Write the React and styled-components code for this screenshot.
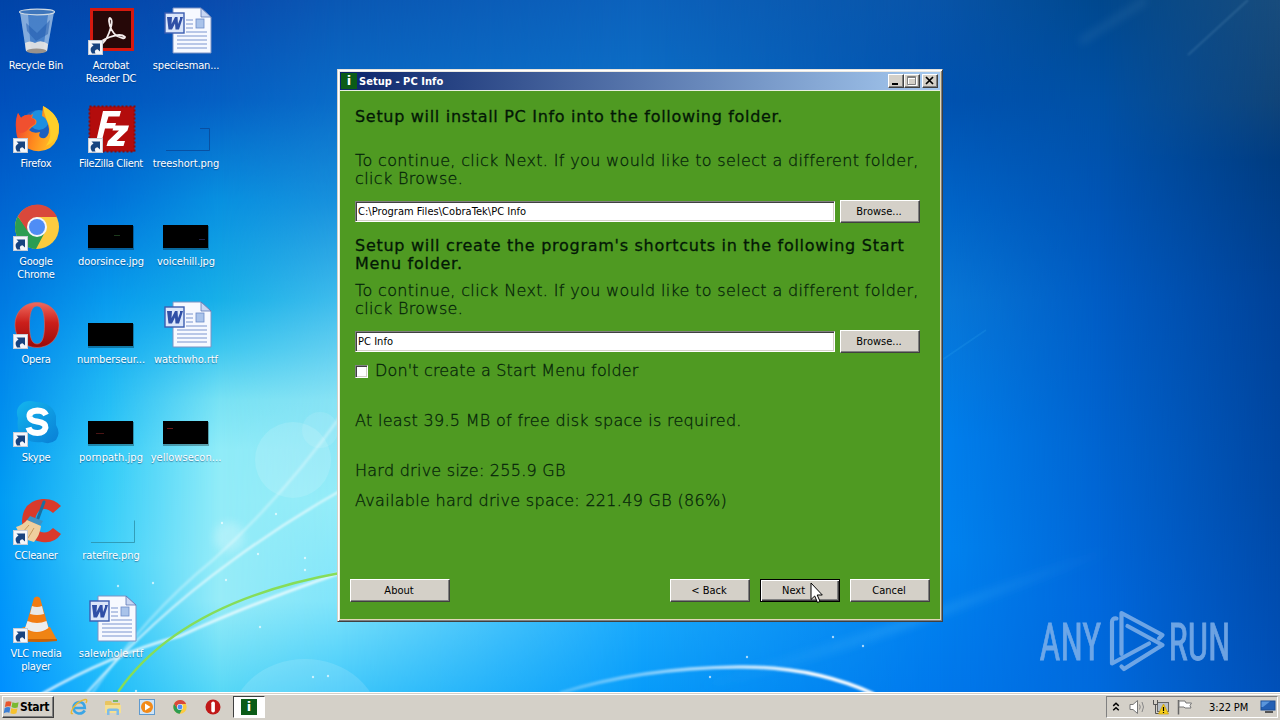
import React from 'react';
import styled, { createGlobalStyle, css } from 'styled-components';

const GlobalStyle = createGlobalStyle`
    * {
        box-sizing: border-box;
    }
    body {
        margin: 0;
        overflow: hidden;
        font-family: "DejaVu Sans Condensed", "DejaVu Sans", sans-serif;
        font-stretch: condensed;
        font-size: 11px;
        color: #000;
    }
`;

const Screen = styled.div`
    position: relative;
    width: 1280px;
    height: 720px;
    display: flex;
    flex-direction: column;
    overflow: hidden;
`;

/* ---------- wallpaper ---------- */

const Wallpaper = styled.div`
    position: absolute;
    inset: 0 0 28px 0;
    background: #0090ff;
    svg {
        position: absolute;
        inset: 0;
    }
`;
const Band = styled.div`
    position: absolute;
    inset: 0;
    background: linear-gradient(to bottom, ${({ $stops }) => $stops});
    ${({ $from, $to }) => $to > 0 && css`
        mask-image: linear-gradient(to right, transparent ${$from}px, #000 ${$to}px);
    `}
`;

const bands = [
    { from: 0, to: 0, stops: '#0044a8 0, #0050bc 100px, #0064d0 200px, #0084ea 350px, #009cf4 500px, #0090ff 692px' },
    { from: 0, to: 110, stops: '#0448ac 0, #0058c0 100px, #0074da 200px, #089cee 300px, #20b8f4 380px, #34ccf8 460px, #40d0fa 560px, #20bcfa 692px' },
    { from: 110, to: 220, stops: '#0a4cae 0, #0560c4 100px, #0890e0 200px, #18b0e8 300px, #40c8f0 350px, #78e2f4 400px, #90ecf8 450px, #98ecf8 600px, #58d8f6 692px' },
    { from: 220, to: 340, stops: '#0a58b4 0, #0a6cc8 100px, #1890dc 200px, #40bcec 300px, #88e2f4 400px, #94ecf8 500px, #80e4fa 600px, #40c8fa 692px' },
    { from: 340, to: 640, stops: '#0c62bc 0, #0c70c8 100px, #2098e0 400px, #18a8fc 620px, #089cfa 692px' },
    { from: 640, to: 940, stops: '#0854a8 0, #0052b0 100px, #0064c8 200px, #0878d8 300px, #0080ee 440px, #0084f0 550px, #0078ec 692px' },
    { from: 940, to: 1100, stops: '#00488e 0, #0050a4 100px, #0054b4 200px, #005cc4 300px, #0064d0 450px, #0068dc 600px, #006adc 692px' },
    { from: 1100, to: 1280, stops: '#184c7c 0, #104478 100px, #003c80 160px, #004298 300px, #0048a4 500px, #0050b8 692px' },
];

const sparks = [
    [222, 523], [276, 514], [226, 580], [258, 554], [305, 558], [305, 570], [136, 691], [153, 583], [118, 586],
    [137, 560], [260, 627], [313, 677], [747, 657], [863, 646], [833, 637], [710, 677], [328, 676],
];

const Backdrop = () => (
    <Wallpaper>
        {bands.map((b) => <Band key={b.to} $from={b.from} $to={b.to} $stops={b.stops} />)}
        <svg width="1280" height="692" fill="none">
            <defs>
                <filter id="soft" x="-20%" y="-20%" width="140%" height="140%"><feGaussianBlur stdDeviation="1" /></filter>
                <filter id="softer" x="-20%" y="-20%" width="140%" height="140%"><feGaussianBlur stdDeviation="4" /></filter>
                <linearGradient id="arc" x1="565" x2="875" y1="0" y2="0" gradientUnits="userSpaceOnUse">
                    <stop offset="0" stopColor="#fff" stopOpacity=".25" />
                    <stop offset=".5" stopColor="#fff" stopOpacity=".7" />
                    <stop offset=".8" stopColor="#fff" />
                </linearGradient>
                <linearGradient id="sky" x1="700" x2="1110" y1="0" y2="0" gradientUnits="userSpaceOnUse">
                    <stop offset="0" stopColor="#6cf" stopOpacity="0" />
                    <stop offset=".5" stopColor="#6cf" stopOpacity=".25" />
                    <stop offset="1" stopColor="#6cf" stopOpacity="0" />
                </linearGradient>
            </defs>
            <g fill="#fff">
                <circle cx="293" cy="460" r="38" opacity=".13" />
                <circle cx="320" cy="430" r="18" opacity=".1" />
                <circle cx="229" cy="537" r="15" opacity=".25" filter="url(#softer)" />
                <ellipse cx="305" cy="725" rx="75" ry="66" opacity=".13" />
            </g>
            <g stroke="#fff" filter="url(#soft)">
                <path d="M85 695Q150 620 233 560Q285 522 340 491" strokeWidth="2" opacity=".75" />
                <path d="M91 695Q145 615 213 560Q280 500 340 417" strokeWidth="2.5" opacity=".35" />
                <path d="M40 695Q110 655 180 636Q250 604 340 573" strokeWidth="2.6" opacity=".8" />
            </g>
            <path d="M118 692Q180 602 340 573" stroke="#86dd58" strokeWidth="2.4" />
            <path d="M560 693Q640 668 738 667Q812 666 874 694" stroke="url(#arc)" strokeWidth="3.4" filter="url(#soft)" />
            <path d="M690 690Q850 645 945 610T1110 550" stroke="url(#sky)" strokeWidth="8" filter="url(#softer)" />
            <path d="M1188 55L1248 0" stroke="#7ac" strokeWidth="1.6" opacity=".3" filter="url(#soft)" />
            <path d="M1080 42L1146 0" stroke="#7ac" strokeWidth="6" opacity=".16" filter="url(#softer)" />
            <path d="M942 360L986 330" stroke="#5cf" strokeWidth="1.6" opacity=".12" />
            {sparks.map(([x, y]) => <circle key={`${x}-${y}`} cx={x} cy={y} r="1.2" fill="#fff" opacity=".65" />)}
        </svg>
    </Wallpaper>
);

/* ---------- desktop icons ---------- */

const Desktop = styled.div`
    position: relative;
    flex: 1;
`;
const IconGrid = styled.div`
    display: grid;
    grid-template-columns: repeat(3, 75px);
    grid-template-rows: repeat(7, 98px);
    margin-left: -2px;
    padding-top: 7px;
`;
const Shortcut = styled.div`
    grid-column: ${({ $col }) => $col};
    grid-row: ${({ $row }) => $row};
    display: flex;
    flex-direction: column;
    align-items: center;
    gap: 4px;
    svg {
        overflow: visible;
        display: block;
    }
`;
const Label = styled.div`
    width: 75px;
    padding-left: 1px;
    color: #fff;
    line-height: 13px;
    text-align: center;
    white-space: pre;
    letter-spacing: ${({ $ls }) => $ls}px;
    text-shadow: 0 1px 1px rgba(0, 40, 90, 0.5);
`;

const Arrow = () => (
    <g>
        <rect x="1.500" y="33.500" width="14" height="14" fill="#f4f6fa" stroke="#c6ccd6" />
        <path d="M5 46.500Q1.500 41 6.500 38.500L4.500 36.500H13V44.500L10.500 42.300Q6.500 43 8.500 46.500Z" fill="#17437f" />
    </g>
);

const RecycleBin = () => (
    <g>
        <path d="M8 5L14 44Q25 48 35 44L42 5Z" fill="#8fb9e4" opacity=".5" />
        <path d="M8 5L14 44H19L16 7ZM42 5L35 44H31L36 8Z" fill="#dcecfb" opacity=".4" />
        <path d="M14 16L25 26L38 13L36 27L24 34L15 24Z" fill="#1d57ac" opacity=".5" />
        <path d="M13 36Q18 33 23 36Q29 32 36 37L35 44Q25 48 14 44Z" fill="#e9e7e3" opacity=".9" />
        <ellipse cx="24.500" cy="44" rx="10" ry="2.500" fill="#98928c" />
        <ellipse cx="25" cy="5" rx="17.500" ry="2.800" fill="#3f76bb" stroke="#cfdae4" strokeWidth="1.200" />
    </g>
);
const Acrobat = () => (
    <g>
        <rect x="3" y="1" width="44" height="43" fill="#d5190f" />
        <rect x="6" y="4" width="38" height="37" fill="#260808" />
        <path d="M23 11Q27 13 22 26Q18 36 14 37Q12 34 23 30Q34 26 38 30Q38 33 30 29Q23 24 22 14Q22 11 23 11Z" fill="none" stroke="#f4ecec" strokeWidth="1.800" />
    </g>
);
const Firefox = () => (
    <g>
        <defs>
            <linearGradient id="ffx" x1="0" x2="1" y1=".3" y2=".6">
                <stop offset="0" stopColor="#ee4032" />
                <stop offset=".5" stopColor="#ff8a1e" />
                <stop offset="1" stopColor="#ffc928" />
            </linearGradient>
        </defs>
        <circle cx="26" cy="22" r="17" fill="#1b5fc0" />
        <circle cx="27" cy="15" r="10" fill="#1d8fe0" />
        <path d="M6 8L9 13Q13 9 19 10L21 9L20 13Q26 14 24 19L20 22L17 25Q21 29 28 27Q25 34 33 33Q39 29 36 19Q34 12 30 11L31 1Q46 9 47 22Q48 35 38 43Q28 49 17 44Q4 38 4 24Q3 15 6 8Z" fill="url(#ffx)" />
        <path d="M31 1Q46 9 47 22Q46 36 34 41Q41 31 37 20Q32 10 31 1Z" fill="#ffcf2a" />
        <path d="M6 8L9 13Q13 9 20 10L19 13Q25 14 23 19L18 22Q14 28 8 28Q2 20 6 8Z" fill="#f0502f" />
    </g>
);
const FileZilla = () => (
    <g>
        <rect x="2.500" y="1.500" width="45" height="45" fill="#b30c0c" stroke="#8d0a0a" strokeWidth="2" strokeDasharray="2 2" />
        <path d="M16 6H34L32.500 11.500H21.500L19.500 18H29L27.500 23.500H18L14 39H8.500Z" fill="#fff" />
        <path d="M27 20.500H42L40.500 25.500L29.500 36H38L36.500 41H19.500L21 36L32 25.500H25.500Z" fill="#fff" />
    </g>
);
const Chrome = () => (
    <g>
        <circle cx="25" cy="24" r="22" fill="#fccb3f" />
        <path d="M5.700 13.500A22 22 0 0 0 24 46L33 29L25 24L14.500 25Z" fill="#2b9d52" />
        <path d="M25 14H45.200A22 22 0 0 0 5.800 13.200L15.500 28L16 19Z" fill="#d9483b" />
        <circle cx="25" cy="24" r="10" fill="#f3f5f9" />
        <circle cx="25" cy="24" r="8" fill="#4f8df5" />
    </g>
);
const Opera = () => (
    <g>
        <defs>
            <linearGradient id="opera" x1="0" x2="0" y1="0" y2="1">
                <stop offset="0" stopColor="#ef6a5e" />
                <stop offset=".45" stopColor="#cb1f1a" />
                <stop offset="1" stopColor="#9a0b0a" />
            </linearGradient>
        </defs>
        <path fillRule="evenodd" fill="url(#opera)" stroke="#d56860" strokeWidth=".6" d="M25 1.500C38 1.500 47 11 47 24S38 46.500 25 46.500S3 37 3 24S12 1.500 25 1.500ZM25 5C19 5 17.500 14 17.500 24S19 43 25 43S32.500 34 32.500 24S31 5 25 5Z" />
    </g>
);
const Skype = () => (
    <g>
        <defs>
            <linearGradient id="skype" x1="0" x2=".8" y1="0" y2="1">
                <stop offset="0" stopColor="#13b5ee" />
                <stop offset="1" stopColor="#0a84d8" />
            </linearGradient>
        </defs>
        <path d="M12 3Q18 1 24 3Q40 3 44 17Q44 22 44 26Q49 34 44 41Q38 46 30 43Q12 45 6 30Q5 24 6 19Q2 9 12 3Z" fill="url(#skype)" />
        <path d="M34 16Q32 11.500 25.500 11.500Q17 12 17.500 17.500Q18 21.500 25 22.500Q34 24 33.500 28.500Q32 34 25.500 34Q18 34 16.500 28.500" fill="none" stroke="#fff" strokeWidth="6" />
    </g>
);
const CCleaner = () => (
    <g>
        <path d="M49 9L41 16Q33 9 27 14Q20 22 26 33Q33 39 41 31L49 37Q42 47 30 45Q10 42 10 24Q11 4 30 2Q42 1 49 9Z" fill="#d93a2b" />
        <path d="M32 5L25 24" stroke="#1b6f9f" strokeWidth="3" strokeLinecap="round" />
        <path d="M18 19L31 24L28 29L15 23Z" fill="#3f93c4" />
        <path d="M15 23L29 29Q28 38 22 45Q9 43 4 30Q11 28 15 23Z" fill="#efcf9e" />
        <path d="M17 28L10 36M22 31L16 41" stroke="#c99a5c" strokeWidth="1" />
    </g>
);
const Vlc = () => (
    <g>
        <path d="M7 34L12 32H38L45 45Q25 48 8 45Z" fill="#f08414" />
        <path d="M8 44H45V46Q26 48 8 46Z" fill="#c96206" />
        <path d="M22 3Q25 0 28 3L37 34Q25 42 13 34Z" fill="#f27c12" />
        <path d="M20 11Q25 13 30 11L32 19Q25 21 18 19Z" fill="#e8e8e8" />
        <path d="M15.500 26Q25 30 34.500 26L36.500 33Q25 41 13 33Z" fill="#ededed" />
    </g>
);
const WordDoc = () => (
    <g>
        <path d="M11 1H39L49 10V46H11Z" fill="#f6f9ff" stroke="#7d93c4" strokeWidth="1" />
        <path d="M39 1V10H49Z" fill="#c8d6f2" stroke="#5a76b4" strokeWidth=".8" />
        <path d="M24 13H31M24 17H31M24 21H31M24 25H45M15 29H45M15 33H45M15 37H45M15 41H45" stroke="#7b95cf" strokeWidth="1.200" />
        <rect x="34" y="12" width="8" height="9" fill="#a9c3ea" stroke="#6d8cc8" strokeWidth=".8" />
        <rect x="3" y="6" width="19" height="20" fill="#dbe6fa" stroke="#3b5db0" strokeWidth="1.400" />
        <path d="M5 10H10L9.500 17L13 10H15.500L16 17L18 12V10H21L17 22.500H13.500L13 16.500L10 22.500H6.500Z" fill="#2f4fa6" />
    </g>
);
const Thumb = ({ mark }) => (
    <g>
        <rect x="1" y="23" width="46" height="24" fill="#000" opacity=".3" />
        <rect x="1" y="22" width="45" height="23" fill="#000" />
        {mark && <path d={mark.d} stroke={mark.color} />}
    </g>
);
const EmptyThumb = ({ stroke, top }) => (
    <path d={`M4 45.500H47.500V23.500${top ? 'H38' : ''}`} stroke={stroke} fill="none" opacity=".8" />
);

const shortcuts = [
    { col: 1, row: 1, text: 'Recycle Bin', icon: <RecycleBin /> },
    { col: 1, row: 2, text: 'Firefox', icon: <Firefox />, link: true },
    { col: 1, row: 3, text: 'Google\nChrome', icon: <Chrome />, link: true },
    { col: 1, row: 4, text: 'Opera', icon: <Opera />, link: true },
    { col: 1, row: 5, text: 'Skype', icon: <Skype />, link: true },
    { col: 1, row: 6, text: 'CCleaner', icon: <CCleaner />, link: true },
    { col: 1, row: 7, text: 'VLC media\nplayer', icon: <Vlc />, link: true },
    { col: 2, row: 1, text: 'Acrobat\nReader DC', icon: <Acrobat />, link: true },
    { col: 2, row: 2, text: 'FileZilla Client', icon: <FileZilla />, link: true, ls: -0.35 },
    { col: 2, row: 3, text: 'doorsince.jpg', ls: -0.05, icon: <Thumb mark={{ d: 'M27 32.5H33', color: '#1c3a1c' }} /> },
    { col: 2, row: 4, text: 'numberseur...', ls: -0.05, icon: <Thumb /> },
    { col: 2, row: 5, text: 'pornpath.jpg', ls: 0.05, icon: <Thumb mark={{ d: 'M9 34.5H17', color: '#4a1414' }} /> },
    { col: 2, row: 6, text: 'ratefire.png', ls: -0.05, icon: <EmptyThumb stroke="#2c8fa8" /> },
    { col: 2, row: 7, text: 'salewhole.rtf', ls: 0.05, icon: <WordDoc /> },
    { col: 3, row: 1, text: 'speciesman...', ls: -0.15, icon: <WordDoc /> },
    { col: 3, row: 2, text: 'treeshort.png', ls: -0.05, icon: <EmptyThumb stroke="#0a4896" top /> },
    { col: 3, row: 3, text: 'voicehill.jpg', ls: -0.1, icon: <Thumb mark={{ d: 'M37 36.5H43', color: '#23234a' }} /> },
    { col: 3, row: 4, text: 'watchwho.rtf', ls: -0.05, icon: <WordDoc /> },
    { col: 3, row: 5, text: 'yellowsecon...', ls: 0.05, icon: <Thumb mark={{ d: 'M5 29.5H11', color: '#6a1818' }} /> },
];

/* ---------- setup window ---------- */

const Window = styled.div`
    position: absolute;
    left: 337px;
    top: 69px;
    width: 606px;
    height: 553px;
    display: flex;
    flex-direction: column;
    border: 1px solid;
    border-color: #e4e2dc #404040 #404040 #d4d0c8;
    box-shadow: inset 1px 1px #fff, inset -1px -1px #808080, inset 2px 2px #ece9e2, inset -2px -2px #e2d8b8;
    padding: 2px;
    background: #4f9a22;
`;
const TitleBar = styled.div`
    height: 18px;
    flex: none;
    display: flex;
    align-items: center;
    padding: 0 2px 0 1px;
    background: linear-gradient(to right, #0a246a, #a6caf0);
    color: #fff;
    font-weight: bold;
`;
const TitleText = styled.div`
    flex: 1;
    padding-left: 2px;
    letter-spacing: 0.05px;
`;
const InfoBadge = styled.div`
    width: 16px;
    height: 16px;
    background: #0b5c17;
    color: #fff;
    font: bold 13px/16px "DejaVu Sans", sans-serif;
    text-align: center;
`;
const raised = css`
    background: #d4d0c8;
    border: 1px solid;
    border-color: #fff #404040 #404040 #fff;
    box-shadow: inset -1px -1px #808080;
`;
const CaptionButton = styled.div`
    ${raised}
    width: 16px;
    height: 14px;
    margin-left: ${({ $gap }) => $gap || 0}px;
    svg {
        display: block;
    }
`;
const Client = styled.div`
    flex: 1;
    border-top: 1px solid #e8efe0;
    background: #4f9a22;
    padding: 17px 10px 17px 15px;
    display: flex;
    flex-direction: column;
`;
const Line = styled.div`
    margin-top: ${({ $top }) => $top || 0}px;
    font-family: "DejaVu Sans", sans-serif;
    font-stretch: normal;
    font-weight: 200;
    font-size: 16px;
    line-height: 18px;
    white-space: pre;
    color: #06240a;
    letter-spacing: ${({ $ls }) => $ls || 0.3}px;
    -webkit-text-stroke: 0.3px #06240a;
`;
const Heading = styled(Line)`
    color: #031806;
    font-weight: 400;
    letter-spacing: ${({ $ls }) => $ls || 0.72}px;
    -webkit-text-stroke: 0.3px #031806;
`;
const FolderRow = styled.div`
    display: flex;
    align-items: center;
    gap: 5px;
    margin-top: 12px;
`;
const Field = styled.div`
    width: 480px;
    height: 21px;
    background: #fff;
    border: 1px solid;
    border-color: #808080 #fff #fff #808080;
    box-shadow: inset 1px 1px #404040, inset -1px -1px #d4d0c8;
    padding-left: 2px;
    line-height: 20px;
    letter-spacing: 0.04px;
`;
const Button = styled.div`
    ${raised}
    width: ${({ $w }) => $w || 80}px;
    height: 23px;
    padding-right: 2px;
    line-height: 22px;
    text-align: center;
    ${({ $focused }) => $focused && css`
        border-color: #000;
        box-shadow: inset 1px 1px #fff, inset -1px -1px #404040, inset -2px -2px #808080;
        padding-right: 13px;
    `}
`;
const CheckRow = styled.div`
    display: flex;
    align-items: center;
    gap: 7px;
    margin-top: 9px;
`;
const CheckBox = styled.div`
    width: 13px;
    height: 13px;
    background: #fff;
    border: 1px solid;
    border-color: #808080 #fff #fff #808080;
    box-shadow: inset 1px 1px #404040, inset -1px -1px #d4d0c8;
`;
const Footer = styled.div`
    display: flex;
    gap: 10px;
    margin: auto 0 0 -5px;
`;
const Spacer = styled.div`
    flex: 1;
`;
const Cursor = styled.svg`
    position: absolute;
    left: 810px;
    top: 582px;
`;

const SetupWindow = () => (
    <Window>
        <TitleBar>
            <InfoBadge>i</InfoBadge>
            <TitleText>Setup - PC Info</TitleText>
            <CaptionButton>
                <svg width="14" height="12"><rect x="3" y="8" width="6" height="2" /></svg>
            </CaptionButton>
            <CaptionButton>
                <svg width="14" height="12" fill="none">
                    <path d="M3.500 2.500h8v8h-8zM3 3.500h9" stroke="#fff" />
                    <path d="M2.500 1.500h8v8h-8zM2 2.500h9" stroke="#808080" />
                </svg>
            </CaptionButton>
            <CaptionButton $gap={2}>
                <svg width="14" height="12"><path d="M3 2L10 9M10 2L3 9" stroke="#000" strokeWidth="1.700" /></svg>
            </CaptionButton>
        </TitleBar>
        <Client>
            <Heading $ls={0.69}>Setup will install PC Info into the following folder.</Heading>
            <Line $top={26} $ls={0.35}>{'To continue, click Next. If you would like to select a different folder,\nclick Browse.'}</Line>
            <FolderRow>
                <Field>C:\Program Files\CobraTek\PC Info</Field>
                <Button>Browse...</Button>
            </FolderRow>
            <Heading $top={14}>{'Setup will create the program\'s shortcuts in the following Start\nMenu folder.'}</Heading>
            <Line $top={9} $ls={0.35}>{'To continue, click Next. If you would like to select a different folder,\nclick Browse.'}</Line>
            <FolderRow>
                <Field>PC Info</Field>
                <Button>Browse...</Button>
            </FolderRow>
            <CheckRow>
                <CheckBox />
                <Line $ls={0.16}>Don't create a Start Menu folder</Line>
            </CheckRow>
            <Line $top={32}>At least 39.5 MB of free disk space is required.</Line>
            <Line $top={32} $ls={0.26}>Hard drive size: 255.9 GB</Line>
            <Line $top={12}>Available hard drive space: 221.49 GB (86%)</Line>
            <Footer>
                <Button $w={100}>About</Button>
                <Spacer />
                <Button>&lt; Back</Button>
                <Button $focused>Next</Button>
                <Button>Cancel</Button>
            </Footer>
        </Client>
    </Window>
);

/* ---------- watermark ---------- */

const Watermark = styled.svg`
    position: absolute;
    left: 1020px;
    top: 600px;
    overflow: visible;
`;

const AnyRun = () => (
    <Watermark width="255" height="90" fill="#86b4ea" fontFamily="Roboto, sans-serif" fontSize="51" opacity=".82">
        <g stroke="#86b4ea" strokeWidth=".8">
            <text transform="translate(19.500 59.500) scale(.71 1)">ANY</text>
            <text transform="translate(148.500 59.500) scale(.71 1)">RUN</text>
        </g>
        <g fill="none" stroke="#86b4ea" strokeWidth="4.200" strokeLinecap="round" strokeLinejoin="round">
            <path d="M96.500 18.500Q92 18 92 22V63.500L129 43.500" />
            <path d="M101.500 54V13L142.500 35L139 38.500" />
            <path d="M107.500 26L142.500 45L104 69L101.500 66.500" />
        </g>
    </Watermark>
);

/* ---------- taskbar ---------- */

const Taskbar = styled.div`
    position: relative;
    height: 28px;
    display: flex;
    align-items: center;
    padding: 2px 2px 2px;
    background: #d4d0c8;
    border-top: 1px solid #d4d0c8;
    box-shadow: inset 0 1px #fff;
`;
const StartButton = styled.div`
    ${raised}
    width: 52px;
    height: 22px;
    display: flex;
    align-items: center;
    font-weight: bold;
    font-size: 12px;
    letter-spacing: -0.3px;
`;
const QuickLaunch = styled.div`
    display: flex;
    align-items: center;
    gap: 16px;
    margin-left: 16px;
    svg {
        display: block;
    }
`;
const TaskButton = styled.div`
    width: 32px;
    height: 22px;
    margin-left: 11px;
    display: flex;
    align-items: center;
    justify-content: center;
    background: #fff;
    border: 1px solid;
    border-color: #404040 #fff #fff #404040;
`;
const Tray = styled.div`
    width: 172px;
    height: 22px;
    margin-left: auto;
    display: flex;
    align-items: center;
    padding-left: 4px;
    border: 1px solid;
    border-color: #808080 #fff #fff #808080;
    svg {
        display: block;
        flex: none;
    }
`;
const TrayIcons = styled.div`
    display: flex;
    align-items: center;
    gap: 6px;
    margin-left: 7px;
`;
const Clock = styled.div`
    width: 41px;
    margin: 0 10px 0 15px;
    white-space: nowrap;
    letter-spacing: -0.1px;
`;

const SmallIcon = ({ children, size = 18, box = 18 }) => (
    <svg width={size} height={size} viewBox={`0 0 ${box} ${box}`} fill="none">{children}</svg>
);

const SystemTray = () => (
    <Tray>
        <SmallIcon size={10} box={9}>
            <path d="M2 3.500L4.500 1.200L7 3.500M2 7.500L4.500 5.200L7 7.500" stroke="#000" strokeWidth="1.300" />
        </SmallIcon>
        <TrayIcons>
            <svg width="18" height="16" fill="none">
                <path d="M2 5.500H5L9.500 1.500V14.500L5 10.500H2Z" fill="#fff" stroke="#777" />
                <path d="M11.500 5.500Q13 8 11.500 10.500M14 3Q17 8 14 13" stroke="#888" />
            </svg>
            <svg width="18" height="16" fill="none">
                <rect x="5.500" y="3.500" width="11" height="9" fill="#b9c0c8" stroke="#666" />
                <path d="M1.500 1V5.500H5.500V1M3.500 5.500V14.500H8" stroke="#555" />
                <path d="M11.500 5L16.500 15H6.500Z" fill="#f6cf1c" stroke="#c79a00" strokeWidth=".7" />
                <path d="M11.500 8V12M11.500 13V14" stroke="#000" strokeWidth="1.200" />
            </svg>
            <svg width="18" height="16" fill="none">
                <path d="M2.500 1V15.500" stroke="#666" strokeWidth="1.500" />
                <path d="M3 2H9L10 4H15.500L14 6.500L15 9H9L8 8H3Z" fill="#fff" stroke="#777" />
            </svg>
        </TrayIcons>
        <Clock>3:22 PM</Clock>
        <svg width="17" height="14">
            <rect x="1" y="1" width="14" height="9" fill="#2460b4" stroke="#1b4c94" />
            <path d="M1.500 1.500H10L3 7H1.500Z" fill="#5b96dc" />
            <path d="M5 12H13" stroke="#555" strokeWidth="2" />
        </svg>
    </Tray>
);

const StartBar = () => (
    <Taskbar>
        <StartButton>
            <SmallIcon size={17}>
                <path d="M3 3Q6 1.500 9 3L8 8Q5 7 2 8.500Z" fill="#e8552c" />
                <path d="M10 3.500Q13 5 16.500 3.500L15.500 9Q12 10 9 8.500Z" fill="#7ab92f" />
                <path d="M1.800 9.500Q5 8 7.800 9L6.800 14.500Q4 13.500 .8 15Z" fill="#3c7fd4" />
                <path d="M8.800 9.500Q12 11 15.300 10L14.200 15.200Q11 16.500 7.800 15Z" fill="#f6c12c" />
            </SmallIcon>
            Start
        </StartButton>
        <QuickLaunch>
            <SmallIcon>
                <path d="M14.800 12.500Q12.500 16 8.500 15.500Q3.500 14.500 3.500 9.500Q4 4.500 9 4Q14.500 4 14.800 10H4" stroke="#3aa5e6" strokeWidth="2.600" />
                <path d="M3 15.500Q-.5 16.500 3 10Q8 3 15 1.500Q18 1 16 5" stroke="#eab932" strokeWidth="1.400" />
            </SmallIcon>
            <SmallIcon>
                <path d="M1 4Q1 3 2 3H7L8 5H16V15H1Z" fill="#e8c460" />
                <path d="M1 7H17V15H1Z" fill="#f5df92" />
                <path d="M3 17V12Q3 10.500 5 10.500H13Q15 10.500 15 12V17H12.500V13H5.500V17Z" fill="#7fbce8" />
                <path d="M9 2H14V4H9Z" fill="#7cb85c" />
            </SmallIcon>
            <SmallIcon>
                <rect x="1.500" y="1.500" width="15" height="15" fill="#cfe4f7" stroke="#5f9ace" />
                <circle cx="9" cy="9" r="6" fill="#f28a18" />
                <path d="M7 5.500L12.500 9L7 12.500Z" fill="#fff" />
            </SmallIcon>
            <svg width="16" height="14" viewBox="2 1 46 46"><Chrome /></svg>
            <SmallIcon>
                <circle cx="9" cy="9" r="7.500" fill="#c01818" />
                <rect x="7.300" y="3.500" width="3.600" height="11" rx="1.800" fill="#fff" />
            </SmallIcon>
        </QuickLaunch>
        <TaskButton><InfoBadge>i</InfoBadge></TaskButton>
        <SystemTray />
    </Taskbar>
);

export default function App() {
    return (
        <Screen>
            <GlobalStyle />
            <Backdrop />
            <Desktop>
                <IconGrid>
                    {shortcuts.map((s) => (
                        <Shortcut key={s.text} $col={s.col} $row={s.row}>
                            <svg width="48" height="48">{s.icon}{s.link && <Arrow />}</svg>
                            <Label $ls={s.ls ?? -0.25}>{s.text}</Label>
                        </Shortcut>
                    ))}
                </IconGrid>
                <AnyRun />
                <SetupWindow />
                <Cursor width="14" height="22">
                    <path d="M1 1V17.500L4.700 14L7.500 20.500L10 19.400L7.200 13H12.300Z" fill="#fff" stroke="#000" />
                </Cursor>
            </Desktop>
            <StartBar />
        </Screen>
    );
}
